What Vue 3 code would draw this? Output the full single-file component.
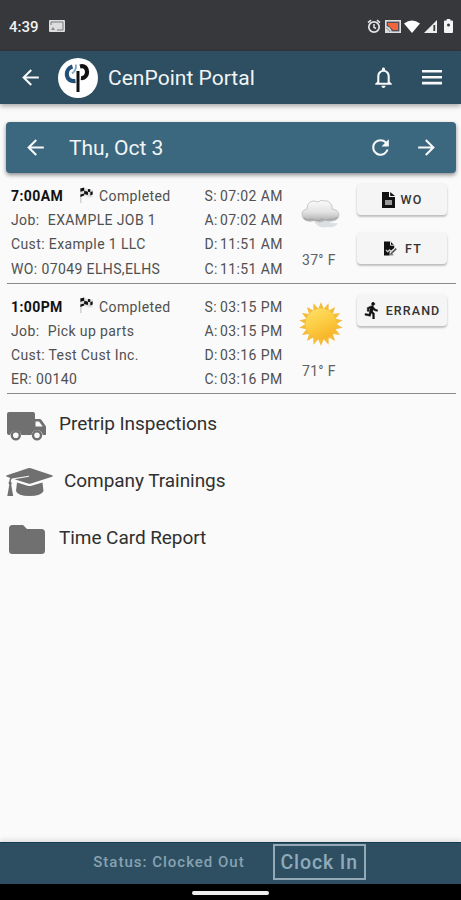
<!--
  CenPoint Portal 首页
  功能：当日任务列表、天气、常用入口、打卡状态
-->
<template>
  <div class="portal-page">
    <!-- 系统状态栏 -->
    <div class="status-bar">
      <span class="clock">4:39</span>
      <svg class="cast" viewBox="0 0 16 12"><rect width="16" height="12" rx="1" fill="#ddd" /><path d="M2 5V2h12v8H8" fill="none" stroke="#77787b" /><path d="M2 10l2-3 2 3z" fill="#888" /></svg>
      <div class="status-icons">
        <svg width="14" height="15" viewBox="0 0 14 15" fill="none" stroke="#e6e6e6"><circle cx="7" cy="8" r="5.2" stroke-width="1.7" /><path d="M7 5v3.3l2 1.2M1 3.6l3-2.5M13 3.6l-3-2.5" stroke-width="1.5" /></svg>
        <svg width="16" height="13" viewBox="0 0 16 13"><rect x=".8" y=".8" width="14.4" height="11.4" fill="#50505a" stroke="#ddd" stroke-width="1.6" /><path d="M3 3h10v7H8L3 5z" fill="#f2643a" /><path d="M0 6q6 0 7 7H0z" fill="#ddd" /><path d="M1 8q3 1 4 4" stroke="#888" fill="none" /></svg>
        <svg width="16" height="13" viewBox="0 0 16 13"><path d="M0 3.4Q8-2.6 16 3.4L8 13z" fill="#fff" /></svg>
        <svg width="13" height="13" viewBox="0 0 13 13"><path d="M0 13L13 0v13z" fill="#eee" /><path d="M10.3 5v6" stroke="#37383c" stroke-width="1.8" /></svg>
        <svg class="battery" width="9" height="14" viewBox="0 0 9 14"><path d="M2.7 0h3.6v1.5H8q1 0 1 1V13q0 1-1 1H1q-1 0-1-1V2.500q0-1 1-1h1.700z" fill="#f4f4f4" /><circle cx="4.500" cy="6" r="1.500" fill="#37383c" /></svg>
      </div>
    </div>

    <!-- 顶部标题栏 -->
    <header class="app-bar">
      <svg class="arrow" viewBox="0 0 24 24"><path :d="icons.back" /></svg>
      <svg class="logo" viewBox="0 0 40 40">
        <circle cx="20" cy="20" r="20" fill="#fff" />
        <path d="M14.500 8.500C6 11 7 24.500 17.500 23" fill="none" stroke="#235078" stroke-width="4.200" />
        <path d="M14 15.500q4.500-3 4-9" fill="none" stroke="#8ba7bd" stroke-width="1.800" />
        <path d="M20 13v21" stroke="#111" stroke-width="3" />
        <path d="M22 8.500c9.500-2.500 9 12.500 1 11.500" fill="none" stroke="#111" stroke-width="4.200" />
      </svg>
      <h1>CenPoint Portal</h1>
      <svg class="bell" viewBox="0 0 24 24"><path :d="icons.bell" /></svg>
      <svg class="menu" viewBox="0 0 20 15"><path d="M0 0h20v2.600H0zM0 5.900h20v2.600H0zM0 11.800h20v2.600H0z" /></svg>
    </header>

    <main class="content">
      <!-- 日期切换 -->
      <div class="date-bar">
        <svg class="arrow" viewBox="0 0 24 24"><path :d="icons.back" /></svg>
        <span class="date">Thu, Oct 3</span>
        <svg class="refresh" viewBox="0 0 24 24"><path :d="icons.refresh" /></svg>
        <svg class="arrow next" viewBox="0 0 24 24"><path :d="icons.forward" /></svg>
      </div>

      <!-- 任务列表 -->
      <section v-for="job in jobs" :key="job.id" class="job">
        <div class="job-info">
          <div class="job-head">
            <strong>{{ job.start }}</strong>
            <svg class="flag" viewBox="0 0 16 18">
              <path d="M1.500 1v16" stroke="#bbb" stroke-width="1" />
              <path d="M1 2q3.500-2 7 0t6 0v8q-3 2-6 0t-7 0z" fill="#dedede" />
              <path d="M1 1.500l4-1v3.500l-4 1zM5 4l4 1v3.500l-4-1zM9 2l2.500.5v3L9 5zM11.500 5.500l2.500-1V8l-2.500 1zM1 8l4-1v2l-4 1.500z" fill="#111" />
            </svg>
            <span>Completed</span>
          </div>
          <div v-for="row in job.rows" :key="row.label" class="job-row"><span :class="{ wide: row.label === 'Job:' }">{{ row.label }}</span> {{ row.text }}</div>
        </div>
        <div class="job-times">
          <div v-for="t in job.times" :key="t[0]"><span class="key">{{ t[0] }}:</span><span>{{ t[1] }}</span></div>
        </div>
        <div class="weather">
          <svg v-if="job.weather === 'cloud'" viewBox="0 0 44 44">
            <defs>
              <linearGradient id="cloud" x1="0" y1="0" x2="0" y2="1"><stop offset="0" stop-color="#fcfcfc" /><stop offset=".55" stop-color="#e2e2e2" /><stop offset="1" stop-color="#a9a9a9" /></linearGradient>
            </defs>
            <path d="M14 29q5 9 14 7 9 1 11-4-8 1-12-3z" fill="#dcdfe1" />
            <path d="M9 30q-6-1-6-7 0-4 5-5 0-7 6-8 3 0 5 1 3-3 7-1 3-1 5 2 3 3 2 6 7 1 7 6t-7 6q-4 1-7-1-5 4-10 0-4 2-7 1z" fill="url(#cloud)" stroke="#bcbcbc" stroke-width=".8" />
            <path d="M5 27q3 3 8 1 5 3 10 0 4 2 8 0 5 1 7-2" fill="none" stroke="#999" stroke-width="1.200" opacity=".65" />
          </svg>
          <svg v-else viewBox="0 0 44 44">
            <defs>
              <linearGradient id="sun" x1="0" y1="0" x2=".5" y2="1"><stop offset="0" stop-color="#ffe26b" /><stop offset=".55" stop-color="#fccd43" /><stop offset="1" stop-color="#f8b62c" /></linearGradient>
            </defs>
            <polygon :points="sunRays" fill="#f5bb3b" />
            <circle cx="22" cy="22" r="15.500" fill="url(#sun)" />
          </svg>
          <span>{{ job.temp }}° F</span>
        </div>
        <div class="job-actions">
          <button v-for="b in job.buttons" :key="b.text" :class="b.icon">
            <svg v-if="b.icon === 'doc'" width="13" height="16" viewBox="0 0 13 16"><path d="M0 0h7v5h6v11H0z" fill="#111" /><path d="M8.200 0L13 4H8.200z" fill="#111" /><path d="M3 8h7v5H3z" fill="#999" /></svg>
            <svg v-else-if="b.icon === 'sign'" width="13" height="15" viewBox="0 0 14 15"><path d="M0 0h7l4 4v3L6 11v4H0z" fill="#111" /><path d="M7 0v4h4" fill="none" stroke="#f5f5f5" /><path d="M2 9l2 2 2-2 2 2" fill="none" stroke="#ccc" stroke-width="1.400" /><path d="M7 12.500L12.500 7l1.300 1.300-5.500 5.500-2 .5z" fill="#555" /><path d="M6 14.300h4" stroke="#555" /></svg>
            <svg v-else width="16" height="17" viewBox="2.500 1 19 22"><path :d="icons.run" fill="#111" stroke="#111" stroke-width=".8" /></svg>
            <span>{{ b.text }}</span>
          </button>
        </div>
      </section>

      <!-- 常用入口 -->
      <nav class="links">
        <a v-for="link in links" :key="link.icon" :class="link.icon">
          <svg v-if="link.icon === 'truck'" width="39" height="29" viewBox="0 0 39 29">
            <path d="M2 0h24q2 0 2 2v5h4.500q1.200 0 2 1L38 13q1 1 1 2v8h-3.300A5.700 5.700 0 0 0 24.500 23H14.300A5.700 5.700 0 0 0 3.200 23H2q-2 0-2-2V2q0-2 2-2zM28.500 9.500v5h7.300l-3.800-5z" fill-rule="evenodd" />
            <circle cx="8.800" cy="23.200" r="4" fill="none" stroke="#707070" stroke-width="2.400" /><circle cx="30" cy="23.200" r="4" fill="none" stroke="#707070" stroke-width="2.400" />
          </svg>
          <svg v-else-if="link.icon === 'cap'" width="47" height="29" viewBox="0 0 47 29">
            <path d="M22 .3q1.500-.5 3 0L46 7.200q1.800.8 0 1.600L25 15.600q-1.500.5-3 0L8.500 11.300l14.500-2.500v-1L6 10.500q-1.300 1-1.300 3 1.800 1.500.5 3.200l2 11.300H1.300l2-11.300q-1.500-1.700 0-3.200 0-2.200 1-3.600L1 8.800q-1.800-.8 0-1.600z" />
            <path d="M11 14.500l10.500 3.300q2 .6 4 0L36.500 14.500l1 8.500q-2 5-14 5t-13.500-5z" />
          </svg>
          <svg v-else width="36" height="29" viewBox="0 0 36 29"><path d="M3.500 0h10.500l4 4h14.500Q36 4 36 7.500v18q0 3.500-3.500 3.500h-29Q0 29 0 25.500v-22Q0 0 3.500 0z" /></svg>
          <span>{{ link.text }}</span>
        </a>
      </nav>
    </main>

    <!-- 打卡状态 -->
    <footer class="punch-bar">
      <span class="state">Status: {{ clockedIn ? 'Clocked In' : 'Clocked Out' }}</span>
      <button @click="clockedIn = !clockedIn">{{ clockedIn ? 'Clock Out' : 'Clock In' }}</button>
    </footer>
    <div class="home-bar"><i></i></div>
  </div>
</template>

<script setup>
import { ref } from 'vue'

// 是否已打卡
const clockedIn = ref(false)

// 图标路径
const icons = {
  back: 'M20 11H7.830l5.590-5.590L12 4l-8 8 8 8 1.410-1.410L7.830 13H20z',
  forward: 'M12 4l-1.410 1.410L16.170 11H4v2h12.170l-5.580 5.590L12 20l8-8z',
  bell: 'M12 22c1.100 0 2-.9 2-2h-4c0 1.100.9 2 2 2zm6-6v-5c0-3.070-1.630-5.640-4.500-6.320V4c0-.83-.67-1.500-1.500-1.500s-1.500.67-1.500 1.500v.68C7.640 5.360 6 7.920 6 11v5l-2 2v1h16v-1l-2-2zm-2 1H8v-6c0-2.480 1.510-4.500 4-4.500s4 2.020 4 4.500v6z',
  refresh: 'M17.650 6.350A7.960 7.960 0 0 0 12 4a8 8 0 1 0 7.730 10h-2.080A6 6 0 1 1 12 6c1.660 0 3.140.69 4.220 1.780L13 11h7V4z',
  run: 'M13.490 5.480c1.100 0 2-.9 2-2s-.9-2-2-2-2 .9-2 2 .9 2 2 2zm-3.600 13.900l1-4.400 2.100 2v6h2v-7.500l-2.100-2 .6-3c1.300 1.500 3.300 2.500 5.500 2.500v-2c-1.900 0-3.500-1-4.300-2.400l-1-1.600c-.4-.6-1-1-1.700-1-.3 0-.5.1-.8.1l-5.200 2.200v4.700h2v-3.400l1.800-.7-1.600 8.100-4.900-1-.4 2z'
}

// 当日任务
const jobs = ref([
  {
    id: 1,
    start: '7:00AM',
    rows: [
      { label: 'Job:', text: 'EXAMPLE JOB 1' },
      { label: 'Cust:', text: 'Example 1 LLC' },
      { label: 'WO:', text: '07049 ELHS,ELHS' }
    ],
    times: [['S', '07:02 AM'], ['A', '07:02 AM'], ['D', '11:51 AM'], ['C', '11:51 AM']],
    weather: 'cloud',
    temp: 37,
    buttons: [{ text: 'WO', icon: 'doc' }, { text: 'FT', icon: 'sign' }]
  },
  {
    id: 2,
    start: '1:00PM',
    rows: [
      { label: 'Job:', text: 'Pick up parts' },
      { label: 'Cust:', text: 'Test Cust Inc.' },
      { label: 'ER:', text: '00140' }
    ],
    times: [['S', '03:15 PM'], ['A', '03:15 PM'], ['D', '03:16 PM'], ['C', '03:16 PM']],
    weather: 'sun',
    temp: 71,
    buttons: [{ text: 'ERRAND', icon: 'run' }]
  }
])

const links = [
  { icon: 'truck', text: 'Pretrip Inspections' },
  { icon: 'cap', text: 'Company Trainings' },
  { icon: 'folder', text: 'Time Card Report' }
]

// 太阳光芒：内外半径交替的多边形
const sunRays = Array.from({ length: 36 }, (_, i) => {
  const r = i % 2 ? 15.5 : 22
  const a = (i * Math.PI) / 18
  return `${(22 + r * Math.sin(a)).toFixed(1)},${(22 - r * Math.cos(a)).toFixed(1)}`
}).join(' ')
</script>

<style>
body { margin: 0; background: #fafafa; }
</style>

<style scoped>
.portal-page { display: flex; flex-direction: column; height: 900px; background: #fafafa; font-family: Roboto, "Liberation Sans", sans-serif; color: #444; overflow: hidden; }
svg { display: block; flex: none; }
button { font-family: inherit; cursor: pointer; }

/* 状态栏 */
.status-bar { display: flex; align-items: center; flex: none; height: 51px; padding: 2px 8px 0 9px; box-sizing: border-box; background: #37383c; color: #f2f2f2; }
.clock { font-size: 15px; font-weight: 500; width: 40px; }
.cast { width: 16px; height: 12px; margin-top: -2px; }
.status-icons { display: flex; align-items: center; margin: -1px 0 0 auto; gap: 3.5px; }
.battery { margin-left: 4px; }

/* 标题栏 */
.app-bar { display: flex; align-items: center; flex: none; height: 53px; padding: 0 19px 0 18px; box-sizing: border-box; background: #2d4f61; color: #f2f5f6; box-shadow: 0 2px 5px rgba(0,0,0,0.35); }
.app-bar svg { fill: #f6f8f9; }
.arrow { width: 25px; height: 25px; fill: #f6f8f9; }
.logo { width: 40px; height: 40px; margin-left: 15px; }
.app-bar h1 { margin: 0 auto 0 10px; font-size: 21px; font-weight: 400; letter-spacing: 0.03px; }
.bell { width: 25px; height: 25px; margin-right: 26px; }
.menu { width: 20px; height: 15px; }

/* 主体 */
.content { flex: 1; padding: 18px 5px 0 6px; }
.date-bar { display: flex; align-items: center; height: 51px; padding: 0 17px 0 17px; box-sizing: border-box; border-radius: 4px; background: #3b677f; color: #f2f5f6; box-shadow: 0 2px 4px rgba(0,0,0,0.45); }
.date { margin: 0 auto 0 21px; font-size: 21px; letter-spacing: 0; }
.refresh { width: 25px; height: 25px; margin-right: 21px; fill: #f6f8f9; }

/* 任务 */
.job { display: flex; height: 110.5px; padding: 11px 9px 0 4px; margin-left: 1px; box-sizing: border-box; border-bottom: 1.5px solid #8a8a8a; font-size: 14px; line-height: 24.2px; color: #505050; white-space: nowrap; }
.job-info { width: 193.5px; letter-spacing: 0.38px; }
.job-head { display: flex; align-items: center; letter-spacing: 0.4px; height: 24.2px; }
.job-head strong { width: 68px; color: #111; font-weight: 700; letter-spacing: 0.4px; }
.flag { width: 16px; height: 17px; margin-right: 4px; margin-top: -2px; }
.wide { margin-right: 4.5px; }
.job-times { width: 95.5px; letter-spacing: 0.4px; }
.job-times div { display: flex; }
.key { width: 15.5px; }
.weather { display: flex; flex-direction: column; width: 57px; }
.weather svg { width: 44px; height: 44px; margin: 7px 0 0 -1px; }
.weather span { margin: 13px 0 0 2px; letter-spacing: 0.3px; color: #606060; }
.job-actions { display: flex; flex-direction: column; gap: 17.5px; margin-left: auto; }
.job-actions button { display: flex; align-items: center; justify-content: center; gap: 6px; width: 90px; height: 31px; padding: 0; border: none; border-radius: 4px; background: #f5f5f5; color: #333; font-size: 12.5px; font-weight: 500; letter-spacing: 1.1px; box-shadow: 0 2px 2px rgba(0,0,0,0.22), 0 0 3px rgba(0,0,0,0.07); }
.job-actions .sign { gap: 8px; padding-left: 2px; }

/* 入口 */
.links { padding-top: 2px; color: #303030; font-size: 19px; letter-spacing: -0.06px; }
.links a { display: flex; align-items: center; height: 57px; }
.links a span { margin-top: -2px; }
.links svg { fill: #707070; }
.truck svg { margin: 3px 13px 0 1px; }
.cap svg { margin: 2px 11px 0 0; }
.folder svg { margin: 1px 14px 0 3px; }

/* 打卡栏 */
.punch-bar { display: flex; align-items: center; justify-content: center; flex: none; height: 42px; padding: 0 2px 3px 0; box-sizing: border-box; border-top: 1px solid #123d50; background: #2d4f61; box-shadow: 0 -2px 5px rgba(0,0,0,0.12); }
.state { margin-right: 28px; color: #87a2b1; font-size: 15px; font-weight: 500; letter-spacing: 1px; }
.punch-bar button { width: 93px; height: 36px; padding: 0; border: 2px solid #93a9b6; background: transparent; color: #8faaba; font-size: 19.5px; font-weight: 500; letter-spacing: 0.9px; }
.home-bar { display: flex; justify-content: center; flex: none; height: 16px; background: #000; }
.home-bar i { width: 77px; height: 4px; margin-top: 7px; border-radius: 2px; background: #eee; }
</style>
